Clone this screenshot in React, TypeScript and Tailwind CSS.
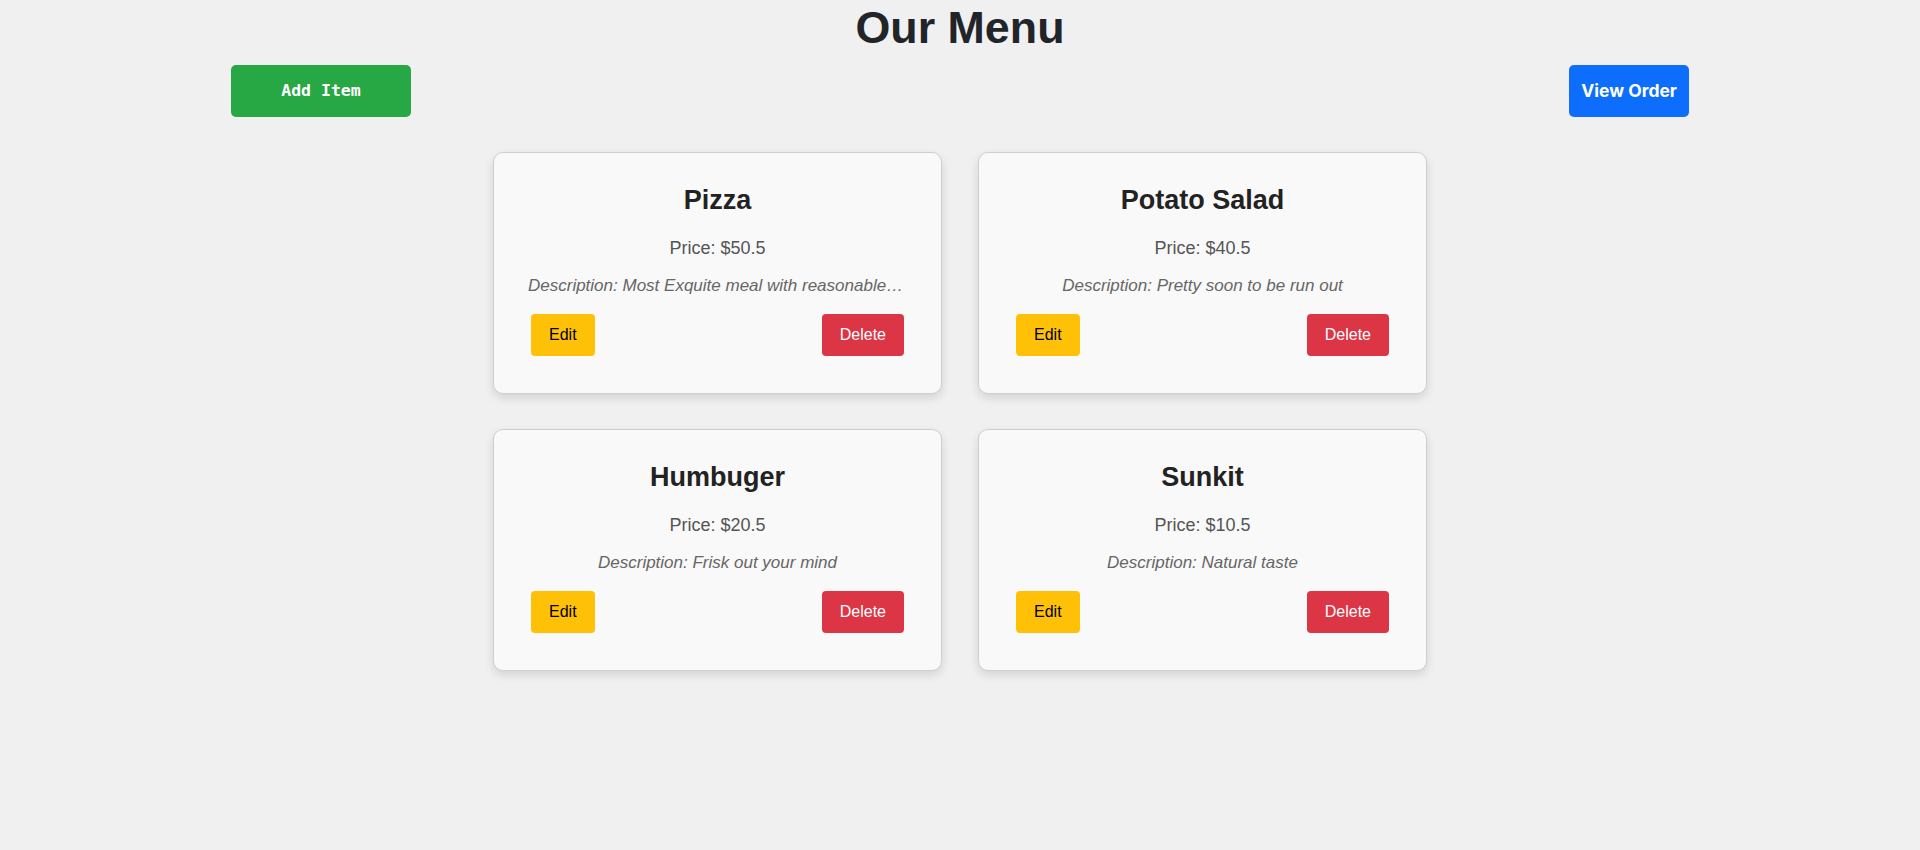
import React from 'react';

interface MenuItem {
  id: number;
  name: string;
  price: number;
  description: string;
}

const items: MenuItem[] = [
  { id: 1, name: 'Pizza', price: 50.5, description: 'Most Exquite meal with reasonable price for everyone' },
  { id: 2, name: 'Potato Salad', price: 40.5, description: 'Pretty soon to be run out' },
  { id: 3, name: 'Humbuger', price: 20.5, description: 'Frisk out your mind' },
  { id: 4, name: 'Sunkit', price: 10.5, description: 'Natural taste' },
];

const MenuCard: React.FC<{ item: MenuItem }> = ({ item }) => (
  <div className="w-[449px] rounded-[10px] border border-[#cfcfcf] bg-[#f9f9f9] px-[37px] pt-[31px] pb-[37px] shadow-[0_4px_10px_rgba(0,0,0,0.12)] text-center">
    <h3 className="text-[27px] leading-[32px] font-bold text-[#222]">{item.name}</h3>
    <p className="mt-[21px] text-[18px] leading-[22px] text-[#555]">Price: ${item.price}</p>
    <p className="-mx-[3px] mt-[17px] text-[17px] leading-[20px] italic text-[#666] whitespace-nowrap overflow-hidden text-ellipsis">
      Description: {item.description}
    </p>
    <div className="mt-[18px] flex justify-between">
      <button
        type="button"
        className="h-[42px] px-[18px] rounded-[4px] bg-[#ffc107] text-[16px] text-black"
      >
        Edit
      </button>
      <button
        type="button"
        className="h-[42px] px-[18px] rounded-[4px] bg-[#dc3545] text-[16px] text-white"
      >
        Delete
      </button>
    </div>
  </div>
);

export default function App() {
  return (
    <div className="min-h-screen w-full bg-[#f0f0f0] font-['Liberation_Sans',Arial,sans-serif] pt-[1px]">
      <h1 className="text-center text-[44.8px] leading-[52px] font-bold text-[#212529]">Our Menu</h1>
      <div className="mx-auto mt-[12px] w-[1458px] flex justify-between">
        <button
          type="button"
          className="h-[52px] w-[180px] rounded-[5px] bg-[#28a745] text-white font-bold text-[16.5px] font-['DejaVu_Sans_Mono',monospace]"
        >
          Add Item
        </button>
        <button
          type="button"
          className="h-[52px] px-[12px] rounded-[5px] bg-[#0d6efd] text-white font-bold text-[17.5px] font-['Inter',sans-serif]"
        >
          View Order
        </button>
      </div>
      <main className="mt-[35px] flex justify-center">
        <div className="grid grid-cols-[449px_449px] gap-x-[36px] gap-y-[35px]">
          {items.map((item) => (
            <MenuCard key={item.id} item={item} />
          ))}
        </div>
      </main>
    </div>
  );
}
